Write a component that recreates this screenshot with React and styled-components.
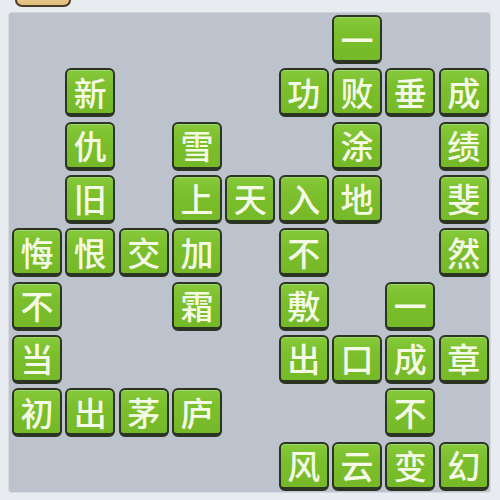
import React from "react";
import styled, { createGlobalStyle } from "styled-components";

const Global = createGlobalStyle`
  html, body { margin: 0; padding: 0; }
  body {
    width: 500px; height: 500px; overflow: hidden;
    background: #e8ebef;
    font-family: "Noto Sans CJK SC", "Noto Sans", sans-serif;
  }
`;

const Page = styled.div`
  position: relative;
  width: 500px;
  height: 500px;
  padding: 12px 9px 0 8px;
  box-sizing: border-box;
`;

const TopButton = styled.div`
  position: absolute;
  left: 15px;
  top: -14px;
  width: 52px;
  height: 17px;
  border: 2px solid #4a3a28;
  border-radius: 7px;
  background: linear-gradient(#f3d9a4, #e2bd7e);
`;

const Board = styled.div`
  width: 483px;
  height: 481px;
  box-sizing: border-box;
  background: #bcc3cc;
  border: 1px solid #d7dbe1;
  border-top-color: #cfd4da;
  border-radius: 4px;
  padding: 2px 3px 0 3px;
  display: grid;
  grid-template-columns: repeat(9, 50px);
  grid-template-rows: repeat(9, 50px);
  column-gap: 3.33px;
  row-gap: 3.33px;
`;

const Tile = styled.div`
  grid-column: ${(p) => p.$c + 1};
  grid-row: ${(p) => p.$r + 1};
  box-sizing: border-box;
  height: 49px;
  border: 2px solid #2c3424;
  border-bottom-width: 4px;
  border-radius: 6px;
  background: linear-gradient(#86c93a 0%, #7bbf2c 40%, #76b928 100%);
  box-shadow: inset 0 1px 0 rgba(255, 255, 255, 0.25);
  display: flex;
  align-items: center;
  justify-content: center;
  color: #f5fae6;
  font-size: 33px;
  font-weight: 500;
  line-height: 1;
  padding-top: 1px;
`;

const tiles = [
  [6, 0, "一"],
  [1, 1, "新"], [5, 1, "功"], [6, 1, "败"], [7, 1, "垂"], [8, 1, "成"],
  [1, 2, "仇"], [3, 2, "雪"], [6, 2, "涂"], [8, 2, "绩"],
  [1, 3, "旧"], [3, 3, "上"], [4, 3, "天"], [5, 3, "入"], [6, 3, "地"], [8, 3, "斐"],
  [0, 4, "悔"], [1, 4, "恨"], [2, 4, "交"], [3, 4, "加"], [5, 4, "不"], [8, 4, "然"],
  [0, 5, "不"], [3, 5, "霜"], [5, 5, "敷"], [7, 5, "一"],
  [0, 6, "当"], [5, 6, "出"], [6, 6, "口"], [7, 6, "成"], [8, 6, "章"],
  [0, 7, "初"], [1, 7, "出"], [2, 7, "茅"], [3, 7, "庐"], [7, 7, "不"],
  [5, 8, "风"], [6, 8, "云"], [7, 8, "变"], [8, 8, "幻"],
];

export default function App() {
  return (
    <>
      <Global />
      <Page>
        <TopButton />
        <Board>
          {tiles.map(([c, r, t], i) => (
            <Tile key={i} $c={c} $r={r}>{t}</Tile>
          ))}
        </Board>
      </Page>
    </>
  );
}
